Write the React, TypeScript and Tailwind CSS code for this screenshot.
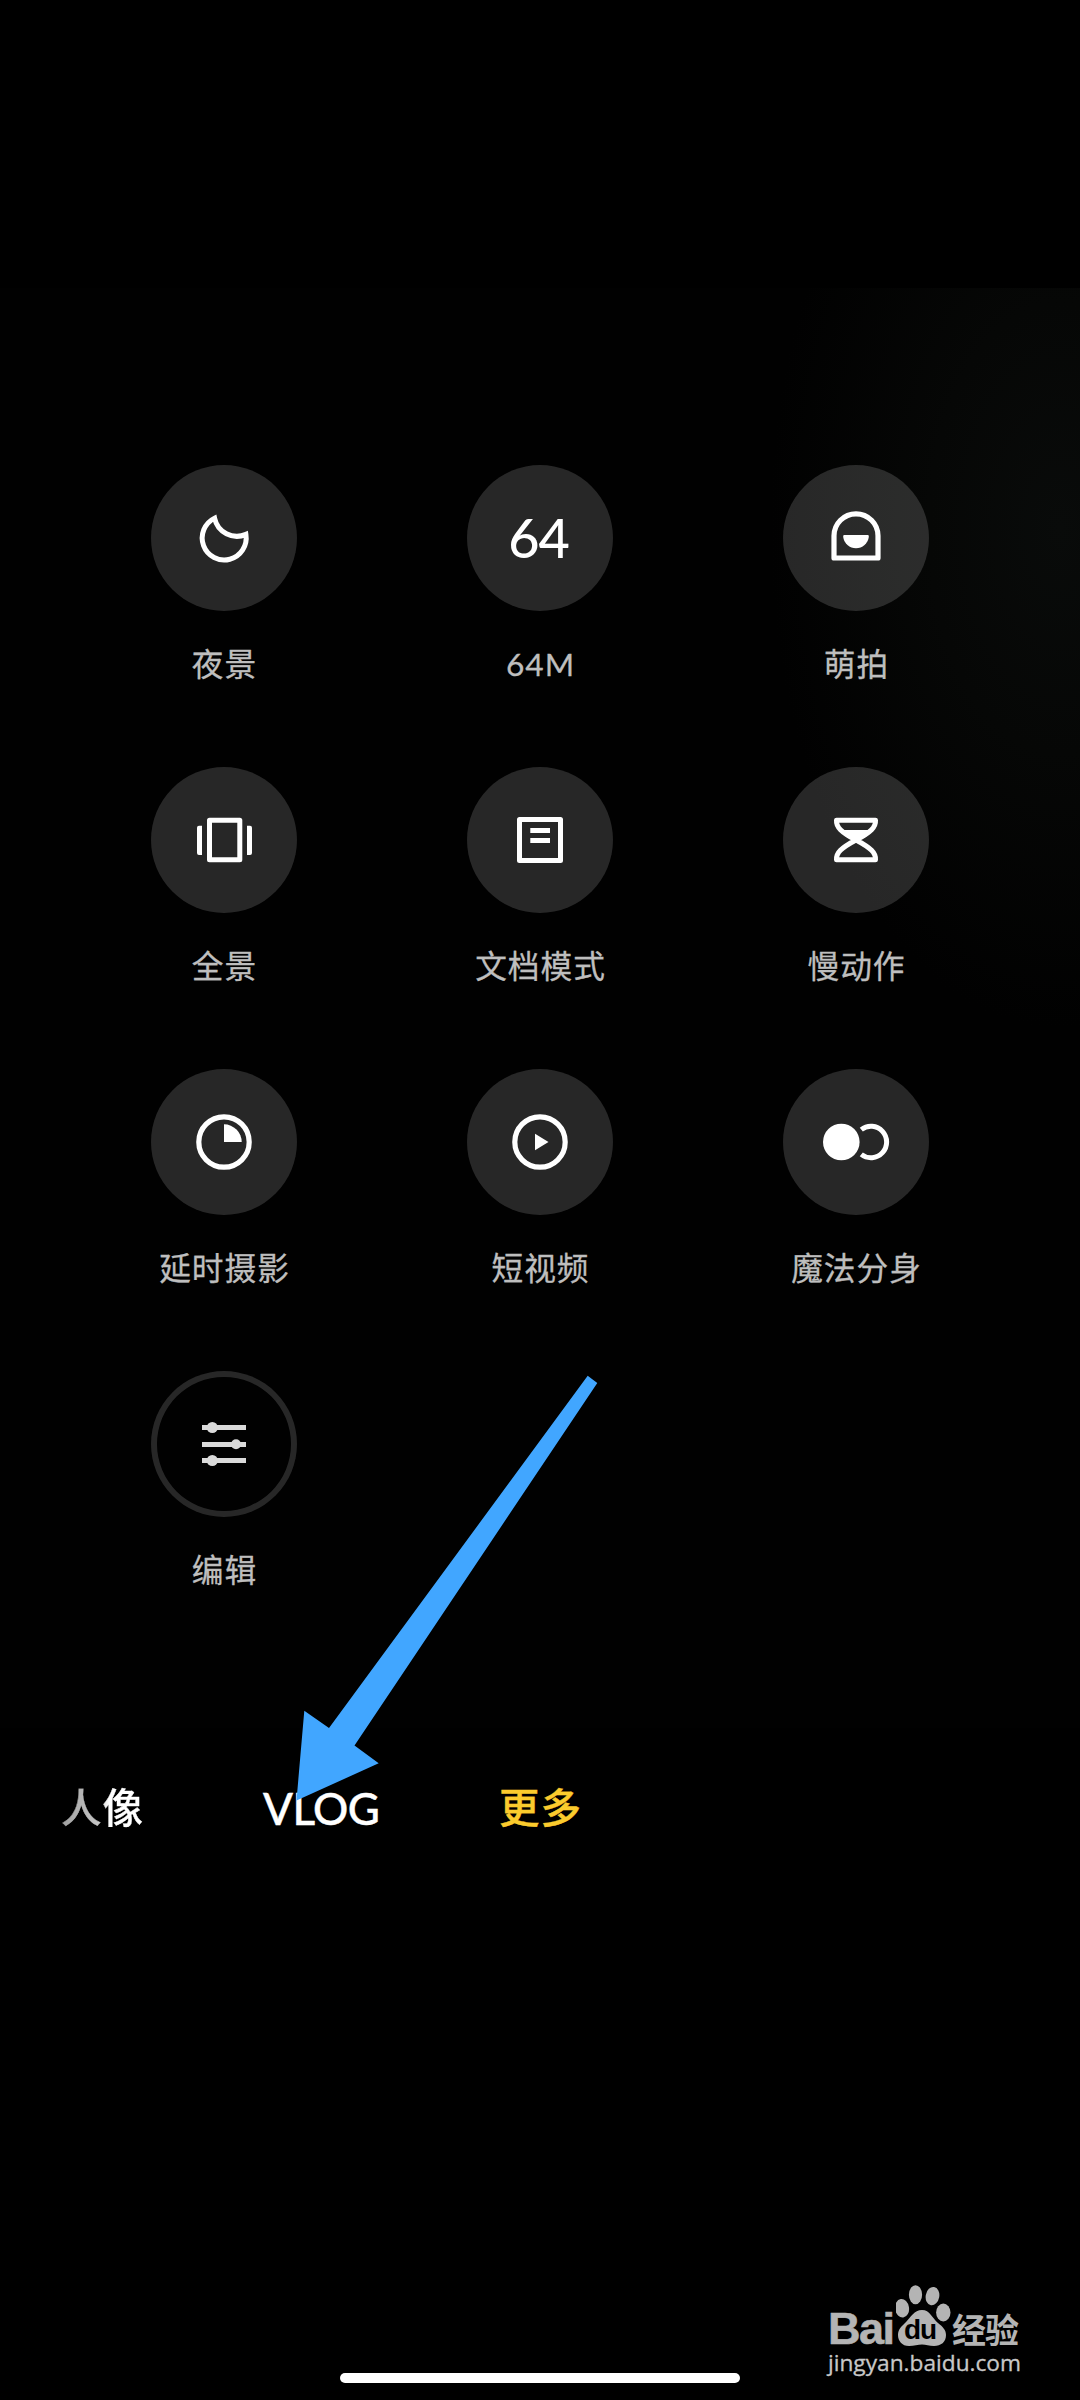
import type { ReactNode } from "react";

type Mode = {
    label: string;
    icon: ReactNode;
    outlined?: boolean;
};

const modes: Mode[] = [
    {
        label: "夜景",
        icon: (
            <path
                d="M63.6 53.2A22 22 0 1 0 94.9 69.4A22.8 22.8 0 0 1 63.6 53.2Z"
                fill="none"
                stroke="currentColor"
                strokeWidth="5"
            />
        ),
    },
    { label: "64M", icon: null },
    {
        label: "萌拍",
        icon: (
            <>
                <path
                    d="M51 93V70.8a22 22 0 0 1 44 0V93Z"
                    fill="none"
                    stroke="currentColor"
                    strokeWidth="5.2"
                    strokeLinejoin="round"
                />
                <path d="M61 70H85Q86 70 85.8 72A12.9 12.9 0 0 1 60.2 72Q60 70 61 70Z" fill="currentColor" />
            </>
        ),
    },
    {
        label: "全景",
        icon: (
            <>
                <path
                    d="M58.5 53.2H88.8V92.8H58.5Z"
                    fill="none"
                    stroke="currentColor"
                    strokeWidth="5"
                    strokeLinejoin="round"
                />
                <path
                    d="M51 58.7V88H48Q46 88 46 86V60.7Q46 58.7 48 58.7ZM96 58.7V88H99Q101 88 101 86V60.7Q101 58.7 99 58.7Z"
                    fill="currentColor"
                />
            </>
        ),
    },
    {
        label: "文档模式",
        icon: (
            <>
                <path
                    d="M52.5 52.5H93.5V93.5H52.5Z"
                    fill="none"
                    stroke="currentColor"
                    strokeWidth="5"
                    strokeLinejoin="round"
                />
                <path d="M63.3 61h19.7v5h-19.7zM63.3 71h19.7v5h-19.7z" fill="currentColor" />
            </>
        ),
    },
    {
        label: "慢动作",
        icon: (
            <>
                <path
                    d="M53.5 53.2H92.5C93 60 88 65 73 73C58 65 53 60 53.5 53.2ZM53.5 92.8H92.5C93 86 88 81 73 73C58 81 53 86 53.5 92.8Z"
                    fill="none"
                    stroke="currentColor"
                    strokeWidth="5"
                    strokeLinejoin="round"
                />
                <path d="M59 63H87L73 73Z" fill="currentColor" />
            </>
        ),
    },
    {
        label: "延时摄影",
        icon: (
            <>
                <circle cx="73" cy="73" r="25.2" fill="none" stroke="currentColor" strokeWidth="5.2" />
                <path d="M73 73V55.3A17.7 17.7 0 0 1 90.7 73Z" fill="currentColor" />
            </>
        ),
    },
    {
        label: "短视频",
        icon: (
            <>
                <circle cx="73" cy="73" r="25.2" fill="none" stroke="currentColor" strokeWidth="5.2" />
                <path d="M68 64.7L81.5 73L68 81.3Z" fill="currentColor" />
            </>
        ),
    },
    {
        label: "魔法分身",
        icon: (
            <>
                <circle cx="58.3" cy="73" r="18.3" fill="currentColor" />
                <path
                    d="M78.3 60.6A15.7 15.7 0 1 1 78.3 85.4"
                    fill="none"
                    stroke="currentColor"
                    strokeWidth="5"
                />
            </>
        ),
    },
    {
        label: "编辑",
        outlined: true,
        icon: (
            <g fill="currentColor">
                <rect x="51" y="54" width="44" height="5" />
                <rect x="51" y="71" width="44" height="5" />
                <rect x="51" y="87" width="44" height="5" />
                <circle cx="61.3" cy="56.5" r="5.5" />
                <circle cx="85" cy="73.3" r="5" />
                <circle cx="61.3" cy="89.5" r="5.5" />
            </g>
        ),
    },
];

function ModeButton({ mode }: { mode: Mode }) {
    return (
        <button className="flex h-[302px] w-[316px] flex-col items-center">
            <span
                className={
                    mode.outlined
                        ? "flex size-[146px] items-center justify-center rounded-full text-[#dadada] shadow-[inset_0_0_0_6px_#272727]"
                        : "flex size-[146px] items-center justify-center rounded-full bg-white/[0.153] text-white"
                }
            >
                {mode.icon ? (
                    <svg viewBox="0 0 146 146" className="size-[146px]">
                        {mode.icon}
                    </svg>
                ) : (
                    <span className="pr-[3px] text-[54px] leading-none font-medium tracking-[-1px]">64</span>
                )}
            </span>
            <span className="mt-[33px] pl-[1px] text-[31.7px] leading-[40px] tracking-[1px] text-[#bebebe] [-webkit-text-stroke:0.3px]">
                {mode.label}
            </span>
        </button>
    );
}

function Watermark() {
    return (
        <div className="absolute top-[2284px] left-[828px] w-[200px] text-[#b4b4b4]">
            <div className="flex h-[64px] items-end">
                <span className="w-[68px] font-['Liberation_Sans'] text-[45px] leading-[38px] font-bold tracking-[-1.5px] [-webkit-text-stroke:0.6px]">
                    Bai
                </span>
                <div className="relative h-[64px] w-[56px]">
                    <svg viewBox="896 2284 56 64" className="h-[64px] w-[56px]" fill="currentColor">
                        <ellipse cx="902" cy="2308.3" rx="7" ry="9.3" transform="rotate(-8 902 2308)" />
                        <ellipse cx="915.5" cy="2294.8" rx="6.6" ry="9.5" />
                        <ellipse cx="932.5" cy="2296" rx="6.8" ry="9.2" transform="rotate(10 932 2296)" />
                        <ellipse cx="943.3" cy="2312.5" rx="7.2" ry="9" />
                        <path d="M922 2310C930 2310 932 2318 938 2323C943 2327 946 2330 946 2335C946 2342 941 2346 934 2346C929 2346 926 2344.5 922 2344.5C918 2344.5 914 2346 909 2346C902 2346 898 2341 898 2335C898 2329 902 2326 906 2322C911 2317 914 2310 922 2310Z" />
                    </svg>
                    <span className="absolute top-[31px] left-[8px] font-['Liberation_Sans'] text-[28px] leading-[30px] font-bold tracking-[-1px] text-black">
                        du
                    </span>
                </div>
                <span className="text-[34px] leading-[36px] font-bold tracking-[-1px]">经验</span>
            </div>
            <div className="pt-px font-['Open_Sans'] text-[22.7px] leading-[28px] text-[#c8c8c8] [-webkit-text-stroke:0.3px]">
                jingyan.baidu.com
            </div>
        </div>
    );
}

export default function App() {
    return (
        <main className="relative flex h-[2400px] w-[1080px] flex-col overflow-hidden bg-black font-[Lato,'Noto_Sans_CJK_SC',sans-serif]">
            {/* Dimmed viewfinder */}
            <section className="mt-[288px] h-[1440px] bg-[#010101] bg-[radial-gradient(ellipse_290px_500px_at_1060px_240px,#090b0a_0%,#060706_45%,#010101_100%)] px-[66px] pt-[177px]">
                <div className="grid grid-cols-3">
                    {modes.map((mode) => (
                        <ModeButton key={mode.label} mode={mode} />
                    ))}
                </div>
            </section>

            {/* Mode tabs */}
            <nav className="flex h-[160px] items-center pl-[61px] text-[40.5px] leading-[60px] font-medium text-white [-webkit-text-stroke:0.4px]">
                <span className="w-[201px] bg-linear-to-r from-[#a0a0a0] via-[#c4c4c4] via-18% to-white to-24% bg-clip-text tracking-[1px] text-transparent">
                    人像
                </span>
                <span className="w-[237px] pl-[1px] text-[44px] tracking-[-0.6px]">VLOG</span>
                <span className="tracking-[1px] text-[#fbcb2d]">更多</span>
            </nav>

            {/* Home indicator */}
            <div className="mt-auto mb-[17px] h-[10px] w-[400px] self-center rounded-full bg-white" />

            {/* Pointer arrow */}
            <svg viewBox="296 1375 302 426" className="absolute top-[1375px] left-[296px] h-[426px] w-[302px]">
                <path
                    d="M587.7 1375.7L597.3 1383L354.5 1745.5L378.7 1763.3L296.5 1800.5L304.3 1710.7L329 1728Z"
                    fill="#41a6ff"
                />
            </svg>

            <Watermark />
        </main>
    );
}
